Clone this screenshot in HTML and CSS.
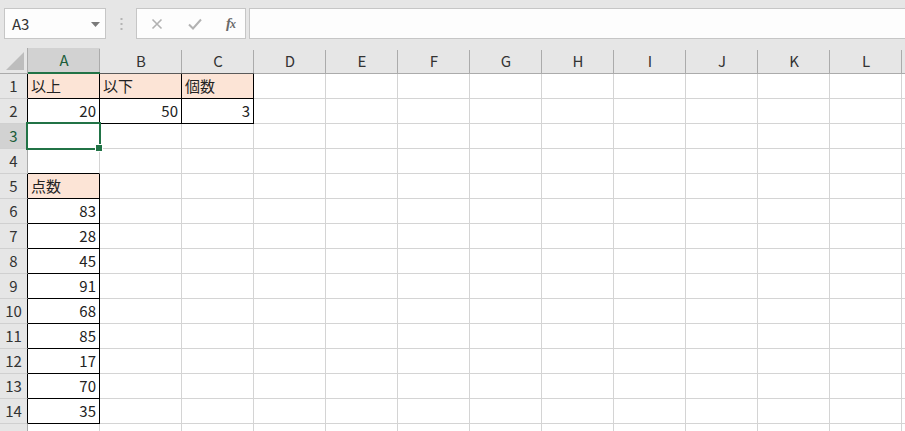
FILE: index.html
```html
<!DOCTYPE html>
<html lang="ja">
<head>
<meta charset="utf-8">
<link rel="stylesheet" href="styles.css">
</head>
<body>
<div class="topbar">
  <div class="namebox">
    <span class="ref">A3</span>
    <svg class="dd" width="9" height="5" viewBox="0 0 9 5"><path d="M0 0h9L4.5 5z" fill="#7a7a7a"/></svg>
  </div>
  <div class="grip">
    <svg width="3" height="12" viewBox="0 0 3 12"><rect x="0.5" y="0" width="2" height="2" fill="#b4b4b4"/><rect x="0.5" y="5" width="2" height="2" fill="#b4b4b4"/><rect x="0.5" y="10" width="2" height="2" fill="#b4b4b4"/></svg>
  </div>
  <div class="fxbox">
    <svg class="ico" width="12" height="12" viewBox="0 0 12 12"><path d="M1.5 1.5l9 9M10.5 1.5l-9 9" stroke="#b2b2b2" stroke-width="1.6" fill="none"/></svg>
    <svg class="ico" width="14" height="12" viewBox="0 0 14 12"><path d="M1 6.5l4 4L13 1.5" stroke="#b2b2b2" stroke-width="2" fill="none"/></svg>
    <span class="fx"><i>f</i><i class="x">x</i></span>
  </div>
  <div class="formula"></div>
</div>
<div class="sheet">
  <div class="row hdr">
    <span class="corner"><span class="tri"></span></span>
    <span class="ch sel">A</span><span class="ch kb">B</span><span class="ch kb">C</span><span class="ch">D</span><span class="ch">E</span><span class="ch">F</span><span class="ch">G</span><span class="ch">H</span><span class="ch">I</span><span class="ch">J</span><span class="ch">K</span><span class="ch">L</span><span class="ch"></span>
  </div>
  <div class="row"><span class="rh kr">1</span><span class="k fill">以上</span><span class="k fill">以下</span><span class="k fill">個数</span><span></span><span></span><span></span><span></span><span></span><span></span><span></span><span></span><span></span><span></span></div>
  <div class="row"><span class="rh kr">2</span><span class="k num">20</span><span class="k num">50</span><span class="k num">3</span><span></span><span></span><span></span><span></span><span></span><span></span><span></span><span></span><span></span><span></span></div>
  <div class="row"><span class="rh rsel">3</span><span class="active"><span class="selbox"></span><span class="handle"></span></span><span></span><span></span><span></span><span></span><span></span><span></span><span></span><span></span><span></span><span></span><span></span><span></span></div>
  <div class="row"><span class="rh">4</span><span class="bb"></span><span></span><span></span><span></span><span></span><span></span><span></span><span></span><span></span><span></span><span></span><span></span><span></span></div>
  <div class="row"><span class="rh kr">5</span><span class="k fill">点数</span><span></span><span></span><span></span><span></span><span></span><span></span><span></span><span></span><span></span><span></span><span></span><span></span></div>
  <div class="row"><span class="rh kr">6</span><span class="k num">83</span><span></span><span></span><span></span><span></span><span></span><span></span><span></span><span></span><span></span><span></span><span></span><span></span></div>
  <div class="row"><span class="rh kr">7</span><span class="k num">28</span><span></span><span></span><span></span><span></span><span></span><span></span><span></span><span></span><span></span><span></span><span></span><span></span></div>
  <div class="row"><span class="rh kr">8</span><span class="k num">45</span><span></span><span></span><span></span><span></span><span></span><span></span><span></span><span></span><span></span><span></span><span></span><span></span></div>
  <div class="row"><span class="rh kr">9</span><span class="k num">91</span><span></span><span></span><span></span><span></span><span></span><span></span><span></span><span></span><span></span><span></span><span></span><span></span></div>
  <div class="row"><span class="rh kr">10</span><span class="k num">68</span><span></span><span></span><span></span><span></span><span></span><span></span><span></span><span></span><span></span><span></span><span></span><span></span></div>
  <div class="row"><span class="rh kr">11</span><span class="k num">85</span><span></span><span></span><span></span><span></span><span></span><span></span><span></span><span></span><span></span><span></span><span></span><span></span></div>
  <div class="row"><span class="rh kr">12</span><span class="k num">17</span><span></span><span></span><span></span><span></span><span></span><span></span><span></span><span></span><span></span><span></span><span></span><span></span></div>
  <div class="row"><span class="rh kr">13</span><span class="k num">70</span><span></span><span></span><span></span><span></span><span></span><span></span><span></span><span></span><span></span><span></span><span></span><span></span></div>
  <div class="row"><span class="rh kr">14</span><span class="k num">35</span><span></span><span></span><span></span><span></span><span></span><span></span><span></span><span></span><span></span><span></span><span></span><span></span></div>
  <div class="row"><span class="rh">15</span><span></span><span></span><span></span><span></span><span></span><span></span><span></span><span></span><span></span><span></span><span></span><span></span><span></span></div>
</div>
</body>
</html>
```
FILE: styles.css
```css
html, body {
  margin: 0;
  padding: 0;
}
body {
  width: 905px;
  height: 431px;
  overflow: hidden;
  background: #e6e6e6;
  font-family: "Noto Sans CJK JP", "Noto Sans", sans-serif;
  font-size: 15px;
  color: #222;
}
.topbar {
  height: 48px;
  box-sizing: border-box;
  padding: 8px 0 0 4px;
  display: flex;
  align-items: flex-start;
}
.namebox {
  width: 102px;
  height: 31px;
  box-sizing: border-box;
  background: #fdfdfd;
  border: 1px solid #c6c6c6;
  display: flex;
  align-items: center;
  justify-content: space-between;
  padding: 0 5px 0 7px;
}
.ref {
  font-size: 15px;
  color: #333;
  line-height: 1;
}
.dd { margin-top: 1px; }
.grip {
  width: 30px;
  height: 31px;
  display: flex;
  align-items: center;
  justify-content: center;
}
.fxbox {
  width: 110px;
  height: 31px;
  box-sizing: border-box;
  background: #fdfdfd;
  border: 1px solid #c6c6c6;
  display: flex;
  align-items: center;
  padding: 0 10px 0 14px;
  gap: 0;
  justify-content: space-between;
}
.fx {
  font-family: "Liberation Serif", serif;
  font-size: 15px;
  color: #6a6a6a;
  font-weight: bold;
  letter-spacing: -1px;
}
.fx .x { font-size: 12px; }
.formula {
  flex: 1;
  margin-left: 3px;
  height: 31px;
  box-sizing: border-box;
  background: #fdfdfd;
  border: 1px solid #c6c6c6;
  border-right: none;
}
.sheet {
  background: #fff;
  width: 905px;
  overflow: hidden;
}
.row {
  display: grid;
  grid-template-columns: 28px 72px 82px 72px repeat(10, 72px);
  height: 25px;
}
.row > span {
  box-sizing: border-box;
  height: 25px;
  border-right: 1px solid #d4d4d4;
  border-bottom: 1px solid #d4d4d4;
  line-height: 24px;
  padding: 0 3px;
  white-space: nowrap;
  overflow: hidden;
}
.row.hdr {
  height: 26px;
  background: #e6e6e6;
}
.row.hdr > span {
  height: 26px;
  line-height: 26px;
  text-align: center;
  color: #333;
}
.row.hdr > .ch {
  border-right: none;
  border-bottom: 1px solid #ababab;
  background-image: linear-gradient(#ababab, #ababab);
  background-size: 1px 23px;
  background-position: right bottom;
  background-repeat: no-repeat;
}
.row.hdr > .ch.sel {
  background-color: #d2d2d2;
  border-bottom: 2px solid #217346;
  line-height: 24px;
  color: #1b5e3a;
}
.row.hdr > .ch.kb { border-bottom-color: #5a5a5a; }
.corner {
  position: relative;
  border-right: 1px solid #ababab !important;
  border-bottom: 1px solid #ababab !important;
}
.tri {
  position: absolute;
  right: 3px;
  bottom: 3px;
  width: 18px;
  height: 18px;
  background: #bdbdbd;
  clip-path: polygon(100% 0, 100% 100%, 0 100%);
}
.row > .rh {
  background: #e6e6e6;
  text-align: center;
  padding: 0;
  color: #333;
  border-right: 1px solid #ababab;
  border-bottom: 1px solid #d0d0d0;
}
.row > .rh.kr { border-right-color: #000; }
.row > .rh.rsel {
  background: #d2d2d2;
  color: #1b5e3a;
  border-right: 1px solid #217346;
}
.row > .k {
  border-right-color: #000;
  border-bottom-color: #000;
}
.row > .bb { border-bottom-color: #000; }
.fill { background: #fce4d6; }
.num { text-align: right; padding-right: 2px; }
.row > .active {
  position: relative;
  overflow: visible;
}
.selbox {
  position: absolute;
  left: -2px;
  top: -2px;
  width: 75px;
  height: 28px;
  box-sizing: border-box;
  border: 2px solid #217346;
  z-index: 2;
}
.handle {
  position: absolute;
  left: 67px;
  top: 20px;
  width: 6px;
  height: 6px;
  background: #217346;
  border: 1px solid #fff;
  z-index: 3;
}
```
